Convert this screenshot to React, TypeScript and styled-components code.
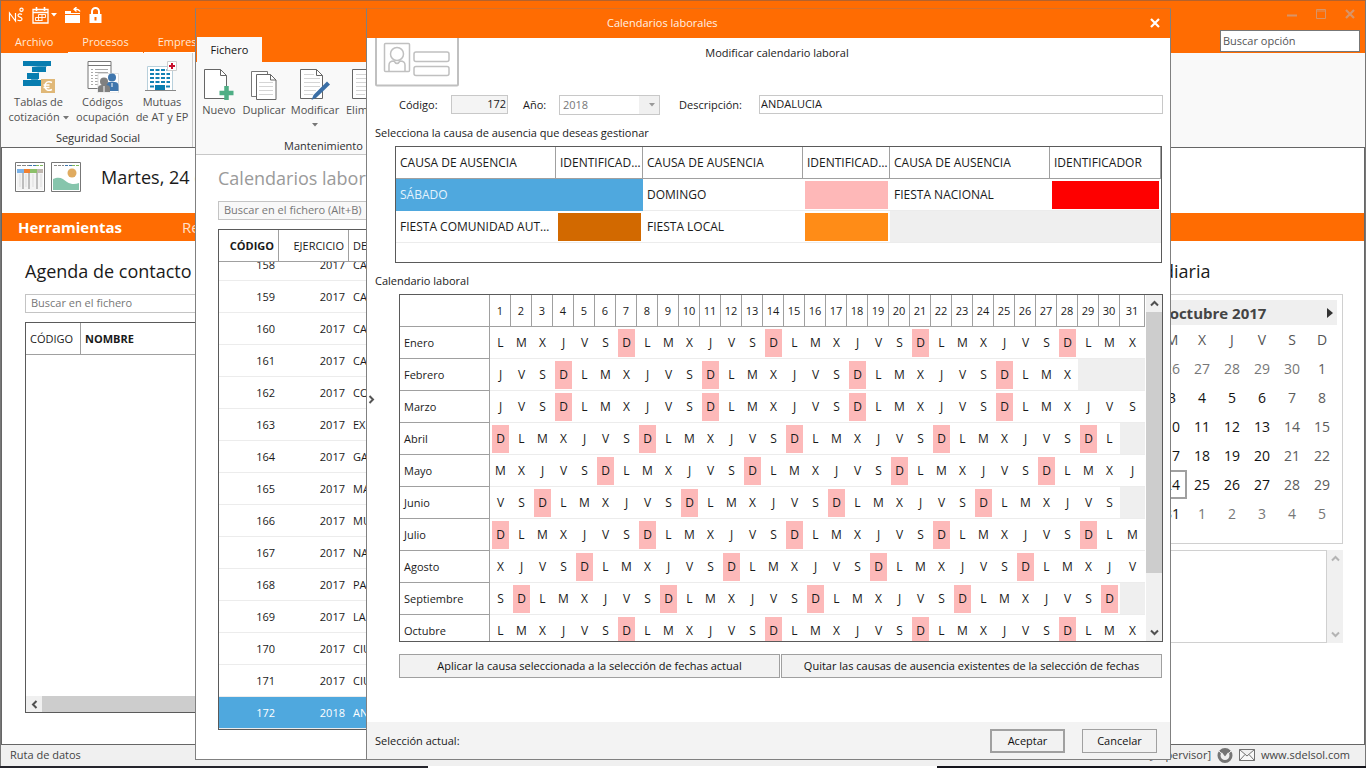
import React from "react";
import styled, { createGlobalStyle, css } from "styled-components";

const ORANGE = "#ff6c02";
const BLUE = "#4fa8de";
const LINE = "#a0a0a0";
const DARK = "#5a5a5a";

const Global = createGlobalStyle`
  * { box-sizing: border-box; }
  html, body { margin: 0; padding: 0; }
  body, button, input, select, table {
    font-family: "Open Sans", "Noto Sans", "Liberation Sans", sans-serif;
    font-size: 11px;
    line-height: 16px;
    color: #1a1a1a;
  }
  button { padding: 0; border: 0; background: none; }
  a { color: inherit; text-decoration: none; }
  h1, h2, h3, p { margin: 0; font-weight: 400; }
`;

/* ---------- desktop and main window ---------- */

const Desktop = styled.div`
  position: relative;
  height: 100vh;
  min-height: 560px;
  overflow: hidden;
  padding-bottom: 2px;
  background: linear-gradient(90deg, #25252c 0 31.3%, #fff 31.3% 68.6%, #15151c 68.6%);
`;

const MainWindow = styled.main`
  height: 100%;
  display: flex;
  flex-direction: column;
  border: 1px solid #777;
  border-top-color: #b5622c;
  border-bottom: 0;
  background: #f0f0f0;
`;

const TitleBar = styled.header`
  display: flex;
  justify-content: space-between;
  height: 52px;
  flex: none;
  background: ${ORANGE};
`;

const TitleLeft = styled.div`
  display: flex;
  flex-direction: column;
  justify-content: space-between;
`;

const QuickBar = styled.div`
  display: flex;
  align-items: center;
  height: 28px;
  padding-left: 7px;
  gap: 8px;
`;

const IconButton = styled.button`
  display: flex;
  align-items: center;
  gap: 2px;
  color: #fff;
`;

const TabBar = styled.nav`
  display: flex;
  gap: 1px;
  height: 22px;
`;

const Tab = styled.button<{ $line?: boolean }>`
  height: 22px;
  padding: 0 14px;
  color: #ffe9d6;
  border-bottom: 1px solid ${(p) => (p.$line ? "#fff" : "transparent")};
`;

const TitleRight = styled.div`
  display: flex;
  flex-direction: column;
  align-items: flex-end;
  padding: 0 5px;
`;

const WindowButtons = styled.div`
  display: flex;
  align-items: center;
  gap: 19px;
  height: 29px;
  padding: 0 5px 4px 0;
`;

const OptionSearch = styled.input`
  width: 140px;
  height: 22px;
  padding: 0 2px 2px;
  border: 1px solid #777;
  background: #fff;
  &::placeholder { color: #555; opacity: 1; }
`;

const Ribbon = styled.section<{ $height: number }>`
  position: relative;
  display: flex;
  flex: none;
  height: ${(p) => p.$height}px;
  background: #f9f9f9;
`;

const RibbonGroup = styled.div`
  display: flex;
  flex-direction: column;
  align-items: center;
  justify-content: space-between;
  padding: 6px 3px 1px 6px;
  border-right: 1px solid #ccc;
`;

const RibbonItems = styled.div`
  display: flex;
`;

const RibbonButton = styled.button<{ $width: number }>`
  display: flex;
  flex-direction: column;
  align-items: center;
  flex: none;
  width: ${(p) => p.$width}px;
  line-height: 15px;
  color: #505050;
  svg { margin-bottom: 1px; }
`;

const CaretSlot = styled.span`
  display: flex;
  padding-top: 6px;
`;

const RibbonLabel = styled.span`
  line-height: 16px;
  color: #303030;
`;

const Workspace = styled.section`
  display: flex;
  flex-direction: column;
  flex: 1;
  min-height: 0;
  padding-top: 1px;
  border: 1px solid #666;
  background: #fff;
`;

const DateRow = styled.div`
  display: flex;
  align-items: center;
  flex: none;
  gap: 6px;
  height: 64px;
  padding: 0 0 8px 13px;
`;

const Heading = styled.h2<{ $muted?: boolean }>`
  font-size: 18px;
  line-height: 26px;
  white-space: nowrap;
  color: ${(p) => (p.$muted ? "#9a9a9a" : "#1a1a1a")};
`;

const DateHeading = styled(Heading)`
  margin-left: 14px;
`;

const SectionBar = styled.nav`
  display: flex;
  align-items: center;
  flex: none;
  gap: 60px;
  height: 28px;
  padding-left: 16px;
  background: ${ORANGE};
`;

const SectionTab = styled.button<{ $active?: boolean }>`
  font-size: 15px;
  line-height: 28px;
  font-weight: ${(p) => (p.$active ? 700 : 400)};
  color: ${(p) => (p.$active ? "#fff" : "#ffe0c8")};
`;

const Columns = styled.div`
  display: grid;
  grid-template-columns: 1fr 248px;
  gap: 24px;
  flex: 1;
  min-height: 0;
  padding: 17px 21px 31px 23px;
`;

const Contacts = styled.div`
  display: flex;
  flex-direction: column;
  min-width: 0;
`;

const FileSearch = styled.input`
  display: block;
  width: 100%;
  height: 19px;
  padding: 0 5px 2px;
  border: 1px solid #c4c4c4;
  background: #fff;
  &::placeholder { color: #777; opacity: 1; }
`;

const ContactSearch = styled(FileSearch)`
  margin: 10px 0 9px;
`;

const ListBox = styled.div`
  display: flex;
  flex-direction: column;
  flex: 1;
  min-height: 0;
  overflow: hidden;
  border: 1px solid ${DARK};
  background: #fff;
`;

const Grid = styled.table`
  width: 100%;
  flex: none;
  table-layout: fixed;
  border-collapse: separate;
  border-spacing: 0;
`;

const HeadCell = styled.th<{ $strong?: boolean; $right?: boolean }>`
  height: 32px;
  padding: 0 4px;
  overflow: hidden;
  text-overflow: ellipsis;
  white-space: nowrap;
  text-align: ${(p) => (p.$right ? "right" : "left")};
  font-weight: ${(p) => (p.$strong ? 700 : 400)};
  border-right: 1px solid ${LINE};
  border-bottom: 1px solid ${LINE};
`;

const Fill = styled.div`
  flex: 1;
`;

const HScroll = styled.div`
  display: flex;
  height: 16px;
  background: #cdcdcd;
`;

const ScrollButton = styled.button<{ $faint?: boolean }>`
  display: flex;
  align-items: center;
  justify-content: center;
  flex: none;
  width: 16px;
  height: 17px;
  background: #f0f0f0;
  color: ${(p) => (p.$faint ? "#b4b4b4" : "#505050")};
`;

const Daily = styled.div`
  display: flex;
  flex-direction: column;
`;

const MonthBox = styled.div`
  height: 250px;
  margin-top: 10px;
  padding: 5px;
  border: 1px solid #d0d0d0;
`;

const MonthHead = styled.div`
  display: flex;
  align-items: center;
  height: 25px;
  padding: 0 4px;
  background: #efefef;
`;

const MonthName = styled.h3`
  flex: 1;
  padding-left: 4px;
  text-align: center;
  font-size: 15px;
  font-weight: 700;
  color: #444;
`;

const MonthTable = styled.table`
  margin-left: auto;
  width: 210px;
  table-layout: fixed;
  border-collapse: separate;
  border-spacing: 0;
`;

const MonthCell = styled.td<{ $tone?: string; $today?: boolean }>`
  height: 29px;
  padding: 0;
  text-align: center;
  font-size: 14px;
  font-weight: 400;
  color: ${(p) => p.$tone || "#111"};
  ${(p) => p.$today && css`border: 2px solid #a0a0a0;`}
`;

const Notes = styled.div`
  display: flex;
  height: 93px;
  margin-top: 6px;
`;

const NotesText = styled.textarea`
  flex: 1;
  min-width: 0;
  border: 1px solid #d0d0d0;
  resize: none;
`;

const VScroll = styled.div`
  display: flex;
  flex-direction: column;
  justify-content: space-between;
  flex: none;
  width: 16px;
  background: #f0f0f0;
`;

const StatusBar = styled.footer`
  display: flex;
  align-items: center;
  justify-content: space-between;
  flex: none;
  height: 21px;
  padding: 0 15px 1px 9px;
  color: #444;
`;

const StatusRight = styled.div`
  display: flex;
  align-items: center;
  gap: 6px;
`;

/* ---------- calendars list window ---------- */

const Floating = styled.section`
  position: absolute;
  top: 8px;
  bottom: 8px;
  right: 195px;
  display: flex;
  flex-direction: column;
  overflow: hidden;
  border: 1px solid #808080;
  border-top-color: #d8702a;
  background: #fff;
`;

const ListWindow = styled(Floating)`
  left: 195px;
`;

const ListTitle = styled.header`
  display: flex;
  align-items: flex-end;
  flex: none;
  height: 53px;
  padding-left: 1px;
  background: ${ORANGE};
`;

const ActiveTab = styled.button`
  width: 65px;
  height: 25px;
  background: #f9f9f9;
  color: #111;
`;

const ListRibbon = styled(Ribbon)`
  border-bottom: 1px solid #c8c8c8;
`;

const ListGroup = styled(RibbonGroup)`
  width: 256px;
  padding: 7px 0 0;
`;

const ListItems = styled(RibbonItems)`
  align-self: flex-start;
`;

const ListBody = styled.div`
  display: flex;
  flex-direction: column;
  flex: 1;
  min-height: 0;
  padding: 10px 22px 29px;
`;

const CalendarSearch = styled(FileSearch)`
  flex: none;
  margin: 10px 0 9px;
  background: #f8f8f8;
`;

const RowsBottom = styled.div`
  display: flex;
  flex-direction: column;
  justify-content: flex-end;
  flex: 1;
  min-height: 0;
  overflow: hidden;
`;

const ListRow = styled.tr<{ $selected?: boolean }>`
  background: ${(p) => (p.$selected ? BLUE : "#fff")};
  td { color: ${(p) => (p.$selected ? "#fff" : "#1a1a1a")}; }
`;

const ListCell = styled.td<{ $right?: boolean }>`
  height: 32px;
  padding: 0 4px;
  text-align: ${(p) => (p.$right ? "right" : "left")};
  border-bottom: 1px solid #ececec;
`;

/* ---------- edit window ---------- */

const EditWindow = styled(Floating)`
  left: 366px;
`;

const EditTitle = styled.header`
  display: flex;
  align-items: center;
  justify-content: space-between;
  flex: none;
  height: 29px;
  padding: 0 10px 2px 240px;
  color: #fff;
  background: ${ORANGE};
`;

const EditHeading = styled.h1`
  font-size: 11px;
  line-height: 16px;
  color: #fff2e6;
`;

const EditBody = styled.div`
  position: relative;
  display: flex;
  flex-direction: column;
  flex: 1;
  min-height: 0;
  padding: 0 7px 44px 8px;
`;

const Banner = styled.div`
  display: grid;
  grid-template-columns: 84px 1fr 68px;
  flex: none;
  height: 56px;
`;

const Subtitle = styled.h2`
  padding-top: 7px;
  text-align: center;
  font-size: 11px;
  line-height: 16px;
`;

const FormRow = styled.div`
  display: flex;
  align-items: center;
  flex: none;
  height: 21px;
  padding-left: 24px;
`;

const FieldLabel = styled.label<{ $width: number }>`
  flex: none;
  width: ${(p) => p.$width}px;
`;

const TextField = styled.input<{ $width?: number }>`
  height: 19px;
  ${(p) => (p.$width ? css`width: ${p.$width}px; flex: none;` : css`flex: 1; min-width: 0;`)}
  padding: 0 1px 2px;
  border: 1px solid #c8c8c8;
  background: #fff;
`;

const CodeField = styled(TextField)`
  margin-right: 15px;
  background: #f4f4f4;
  text-align: right;
`;

const SelectWrap = styled.div`
  position: relative;
  flex: none;
  width: 101px;
  height: 20px;
  margin-right: 19px;
  svg { position: absolute; right: 5px; top: 8px; pointer-events: none; }
`;

const YearSelect = styled.select`
  width: 100%;
  height: 100%;
  padding: 0 3px;
  appearance: none;
  border: 1px solid #c8c8c8;
  border-radius: 0;
  background: linear-gradient(90deg, #fff 0 80%, #f0f0f0 80%);
  color: #777;
  opacity: 1;
`;

const Caption = styled.p`
  flex: none;
  height: 31px;
  padding-top: 10px;
`;

const CauseBox = styled.div`
  flex: none;
  height: 117px;
  margin: 0 1px 0 20px;
  border: 1px solid ${DARK};
`;

const CauseHead = styled(HeadCell)`
  padding: 0 0 0 4px;
  font-size: 12px;
`;

const CauseCell = styled.td<{ $fill?: string; $selected?: boolean }>`
  height: 32px;
  padding: 0 4px;
  font-size: 12px;
  overflow: hidden;
  white-space: nowrap;
  text-overflow: ellipsis;
  border-bottom: 1px solid ${(p) => (p.$selected ? BLUE : "#ececec")};
  background: ${(p) => (p.$selected ? BLUE : p.$fill || "#fff")};
  color: ${(p) => (p.$selected ? "#e4f3fd" : "#1a1a1a")};
`;

const SwatchCell = styled(CauseCell)`
  padding: 2px 2px 1px;
`;

const Swatch = styled.div<{ $color: string }>`
  height: 28px;
  background: ${(p) => p.$color};
`;

const YearBox = styled.div`
  display: flex;
  flex: 1;
  min-height: 0;
  margin-left: 24px;
  overflow: hidden;
  border: 1px solid ${DARK};
`;

const YearView = styled.div`
  flex: 1;
  min-width: 0;
  overflow: hidden;
`;

const DayHead = styled(HeadCell)`
  padding: 0;
  text-align: center;
`;

const MonthLabel = styled.th`
  height: 32px;
  padding: 0 4px;
  text-align: left;
  font-weight: 400;
  border-right: 1px solid ${LINE};
  border-bottom: 1px solid ${LINE};
`;

const DayCell = styled.td<{ $empty?: boolean }>`
  height: 32px;
  padding: 2px 2px 1px;
  text-align: center;
  border-bottom: 1px solid #ececec;
  background: ${(p) => (p.$empty ? "#efefef" : "#fff")};
`;

const Day = styled.div<{ $sunday?: boolean }>`
  height: 28px;
  font-size: 12px;
  line-height: 28px;
  background: ${(p) => (p.$sunday ? "#fdb9b9" : "transparent")};
`;

const YearScroll = styled(VScroll)`
  margin-left: 1px;
`;

const Thumb = styled.div`
  height: 261px;
  margin-bottom: auto;
  background: #cdcdcd;
`;

const Actions = styled.div`
  display: grid;
  grid-template-columns: 1fr 1fr;
  gap: 1px;
  flex: none;
  margin: 12px 1px 0 24px;
`;

const PushButton = styled.button<{ $primary?: boolean; $width?: number }>`
  height: 24px;
  width: ${(p) => (p.$width ? p.$width + "px" : "auto")};
  border: ${(p) => (p.$primary ? 2 : 1)}px solid ${LINE};
  background: #f2f2f2;
  color: #111;
`;

const EditFooter = styled.footer`
  display: flex;
  align-items: center;
  flex: none;
  gap: 17px;
  height: 37px;
  padding: 0 13px 0 8px;
  background: #f3f3f3;
`;

const Selection = styled.span`
  flex: 1;
`;

const Expander = styled.button`
  position: absolute;
  left: 0;
  top: 354px;
  width: 8px;
  height: 12px;
  color: #555;
`;

/* ---------- drawings ---------- */

const Caret = ({ color = "#777" }: { color?: string }) => (
  <svg width="6" height="4" viewBox="0 0 6 4"><path d="M0 0h6L3 3.5z" fill={color} /></svg>
);

const Chevron = ({ turn = 0 }: { turn?: number }) => (
  <svg width="9" height="9" viewBox="0 0 9 9">
    <path d="M1 6.5 4.500 3 8 6.500" transform={`rotate(${turn} 4.5 4.500)`} fill="none" stroke="currentColor" strokeWidth="2" />
  </svg>
);

const Cross = ({ color }: { color: string }) => (
  <svg width="10" height="10" viewBox="0 0 10 10"><path d="M1 1l8 8M9 1l-8 8" stroke={color} strokeWidth="2.200" /></svg>
);

const BrandIcon = () => (
  <svg width="16" height="16" viewBox="0 0 16 16" fill="none" stroke="#fff" strokeWidth="1.200">
    <path d="M1.500 14V6l6 8V6M14 7.500c-1.500-1-4-.8-4 1 0 2 4 1.300 4 3.500 0 2-3 2-4.500 1" />
    <circle cx="13.500" cy="2.800" r="1.600" />
  </svg>
);

const CalendarIcon = () => (
  <svg width="17" height="17" viewBox="0 0 17 17" fill="none" stroke="#fff">
    <path d="M1 2.500h15v13.500H1zM1 5.500h15" strokeWidth="1.300" />
    <path d="M4.500 0v4M12.500 0v4" strokeWidth="1.600" />
    <path d="M6.500 7.500h7M3.500 10.500h10M3.500 13.500h7M3.500 10.500v3M6.500 7.500v6M10 7.500v6M13.500 7.500v3" strokeWidth=".9" />
  </svg>
);

const FolderIcon = () => (
  <svg width="16" height="17" viewBox="0 0 16 17">
    <path d="M0 4h6v2h9v1H0zM0 8h15v8H0z" fill="#fff" />
    <path d="M15 4.500c-1-2.500-3-2.500-6-2.500M11.500 0 9 2.200 11.500 4.500" fill="none" stroke="#fff" strokeWidth="1.300" />
  </svg>
);

const LockIcon = () => (
  <svg width="13" height="17" viewBox="0 0 13 17">
    <path d="M3 8V4.500a3.500 3.500 0 0 1 7 0V8" fill="none" stroke="#fff" strokeWidth="2" />
    <path d="M0.500 7h12v9h-12zM5.500 10v3.500h2V10z" fill="#fff" fillRule="evenodd" />
  </svg>
);

const TablesIcon = () => (
  <svg width="34" height="34" viewBox="0 0 34 34">
    <path d="M1 2h28v5H1zM10 8h14v5H10zM5 14h12v6H5zM1 21h21v6H1z" fill="#087db0" />
    <path d="M8 7h17l-4 4-8 4-5 7h8v-8l8-5z" fill="#087db0" opacity=".7" />
    <rect x="19" y="20" width="14" height="14" fill="#e0b878" />
    <path d="M30 23.500c-4-2-7 0-7 3.500s3 5.500 7 3.500M21.500 26h6M21.500 28.500h6" fill="none" stroke="#fff" strokeWidth="1.500" />
  </svg>
);

const CodesIcon = () => (
  <svg width="34" height="34" viewBox="0 0 34 34">
    <path d="M2 2.500h23v27H2z" fill="#fff" stroke="#777" />
    <path d="M2 6.500h23" stroke="#777" />
    <path d="M5 10.500h2M9 10.500h13M5 13.500h2M9 13.500h13M5 16.500h2M9 16.500h6M5 19.500h2M9 19.500h3M5 22.500h2M9 22.500h3M5 25.500h2M9 25.500h3" stroke="#aaa" />
    <path d="M12 14.500h20.500v19.500H12z" fill="#fff" stroke="#ddd" />
    <circle cx="26" cy="18.500" r="4" fill="#3f76ad" /><path d="M19.500 32v-6q1-3 4-3h5q4 0 4 4v5z" fill="#3f76ad" />
    <circle cx="18" cy="22.500" r="4" fill="#808080" /><path d="M12 33v-4q0-3 4-3h4q4 0 4 3v4z" fill="#808080" />
    <path d="M18 27v6M26 24v4" stroke="#fff" />
  </svg>
);

const MutuaIcon = () => (
  <svg width="34" height="34" viewBox="0 0 34 34">
    <path d="M2.500 7.500h25v24h-25z" fill="#fff" stroke="#b8d0dc" />
    <path d="M5 11h20M5 15h20M5 19h20M5 23h20" stroke="#1181b4" strokeWidth="2" strokeDasharray="4 1.500" />
    <path d="M10 26h10v5H10z" fill="#087db0" /><path d="M5 27.500h4M21 27.500h4" stroke="#1181b4" strokeWidth="2" />
    <path d="M0 31.500h31" stroke="#888" />
    <path d="M22.500 2.500h9v9h-9z" fill="#fff" stroke="#ccc" />
    <path d="M27 4v6M24 7h6" stroke="#c8102e" strokeWidth="2" />
  </svg>
);

const Page = ({ kind }: { kind: "new" | "copy" | "edit" | "plain" }) => (
  <svg width="34" height="32" viewBox="0 0 34 32">
    {kind === "copy" && <path d="M4.500 2.500h16v25h-16z" fill="#fff" stroke="#777" />}
    <g transform={kind === "copy" ? "translate(5 5)" : "translate(1 0)"}>
      <path d={kind === "copy" ? "M4.500.5h14l5.500 5.500v19.500H4.500z" : "M1.500.5h16l6 6v23h-22z"} fill="#fff" stroke="#666" />
      <path d={kind === "copy" ? "M18.500.5v5.500H24" : "M17.500.5v6h6"} fill="none" stroke="#666" />
      {kind !== "new" && <path d={kind === "copy" ? "M7 8.500h14M7 12.500h14M7 16.500h14M7 20.500h14" : "M5 5.500h10M5 9.500h16M5 13.500h16M5 17.500h16M5 21.500h12M5 25.500h9"} stroke="#d5d5d5" />}
    </g>
    {kind === "new" && <path d="M24.500 17v14M17.500 24h14" stroke="#4fae85" strokeWidth="4.500" />}
    {kind === "edit" && <path d="M13.500 31l2-5L29 12.500l3 3-13.500 13z" fill="#3a6ea5" />}
  </svg>
);

const AgendaIcon = () => (
  <svg width="30" height="30" viewBox="0 0 30 30">
    <path d="M.5.500h29v29H.5z" fill="#fff" stroke="#777" />
    <path d="M2 3.500h12" stroke="#888" strokeDasharray="4 1" /><path d="M14 3.500h7" stroke="#3f76ad" strokeDasharray="3 1" /><path d="M21 3.500h7" stroke="#7fb85c" strokeDasharray="3 1" />
    <path d="M2 7h7v4H2z" fill="#7ab2e8" /><path d="M9 7h6v4H9z" fill="#f08030" /><path d="M15 7h7v4h-7z" fill="#8cc06a" /><path d="M22 7h6v4h-6z" fill="#c0b8b0" />
    <path d="M2 11h26v17H2z" fill="#f4f4f4" />
    <path d="M8 11v16M14 11v16M22 11v16" stroke="#aaa" strokeWidth="1.500" />
    <path d="M5 12v13M11 12v13M18 12v13M26 12v13" stroke="#ddd" />
  </svg>
);

const PictureIcon = () => (
  <svg width="30" height="30" viewBox="0 0 30 30">
    <path d="M.5.500h29v29H.5z" fill="#fff" stroke="#777" />
    <path d="M3 3.500h10" stroke="#888" strokeDasharray="3 1" /><path d="M14 3.500h7" stroke="#3f76ad" strokeDasharray="3 1" /><path d="M21 3.500h7" stroke="#7fb85c" strokeDasharray="3 1" />
    <circle cx="21" cy="11" r="4.500" fill="#e0ab60" />
    <path d="M2 17c7-3 10 0 14 3 4 2.500 8 2.500 12 1v7H2z" fill="#86c5ac" />
  </svg>
);

const CardIcon = () => (
  <svg width="84" height="49" viewBox="0 0 84 49" fill="none" stroke="#c0c0c0">
    <path d="M1 0v46.500q0 1 1 1h80q1 0 1-1V0" strokeWidth="2" />
    <rect x="9.500" y="5.500" width="25" height="28" rx="1" strokeWidth="1.500" />
    <circle cx="22" cy="16" r="6.500" strokeWidth="1.500" />
    <path d="M14 33v-6q0-4 5-4 3 5 6 0 5 0 5 4v6" strokeWidth="1.500" />
    <rect x="39" y="14" width="35" height="9.500" rx="2" strokeWidth="1.500" />
    <rect x="39" y="28.500" width="35" height="9" rx="2" strokeWidth="1.500" />
  </svg>
);

const BadgeIcon = () => (
  <svg width="16" height="16" viewBox="0 0 16 16">
    <circle cx="8" cy="8.500" r="6" fill="none" stroke="#757575" strokeWidth="3" />
    <path d="M3.500 3.500h9L8 9.500z" fill="#757575" /><path d="M2 4l6 6.500L14 4" fill="none" stroke="#f0f0f0" />
  </svg>
);

const MailIcon = () => (
  <svg width="16" height="12" viewBox="0 0 16 12" fill="#f8f8f8" stroke="#707070">
    <path d="M.5.500h15v11H.5zM.5.500 8 7l7.500-6.500M.5 11.500l5.500-6M15.500 11.500l-5.500-6" />
  </svg>
);

/* ---------- data ---------- */

const calendars: [number, number, string][] = [
  [158, 2017, "CA"], [159, 2017, "CA"], [160, 2017, "CA"], [161, 2017, "CA"], [162, 2017, "CO"],
  [163, 2017, "EX"], [164, 2017, "GA"], [165, 2017, "MA"], [166, 2017, "MU"], [167, 2017, "NA"],
  [168, 2017, "PA"], [169, 2017, "LA"], [170, 2017, "CIU"], [171, 2017, "CIU"], [172, 2018, "AN"],
];

const months: [string, number, number][] = [
  ["Enero", 0, 31], ["Febrero", 3, 28], ["Marzo", 3, 31], ["Abril", 6, 30], ["Mayo", 1, 31],
  ["Junio", 4, 30], ["Julio", 6, 31], ["Agosto", 2, 31], ["Septiembre", 5, 30], ["Octubre", 0, 31],
];
const WEEK = "LMXJVSD";
const days = Array.from({ length: 31 }, (_, i) => i);

const weeks = [
  [25, 26, 27, 28, 29, 30, 1], [2, 3, 4, 5, 6, 7, 8], [9, 10, 11, 12, 13, 14, 15],
  [16, 17, 18, 19, 20, 21, 22], [23, 24, 25, 26, 27, 28, 29], [30, 31, 1, 2, 3, 4, 5],
];

const monthTone = (row: number, col: number) => {
  if ((row === 0 && col < 6) || (row === 5 && col > 1)) return "#777";
  return col > 4 ? "#5c5c5c" : "#111";
};

/* ---------- windows ---------- */

function MainApp() {
  return (
    <MainWindow>
      <TitleBar>
        <TitleLeft>
          <QuickBar>
            <IconButton aria-label="Inicio"><BrandIcon /></IconButton>
            <IconButton aria-label="Calendario"><CalendarIcon /><Caret color="#fff" /></IconButton>
            <IconButton aria-label="Abrir"><FolderIcon /></IconButton>
            <IconButton aria-label="Bloquear"><LockIcon /></IconButton>
          </QuickBar>
          <TabBar>
            <Tab>Archivo</Tab>
            <Tab $line>Procesos</Tab>
            <Tab $line>Empresa</Tab>
          </TabBar>
        </TitleLeft>
        <TitleRight>
          <WindowButtons>
            <IconButton aria-label="Minimizar"><svg width="10" height="10"><path d="M0 6.500h10" stroke="#d89468" strokeWidth="2" /></svg></IconButton>
            <IconButton aria-label="Maximizar"><svg width="10" height="10"><path d="M.5.500h9v9h-9zM0 2h10" fill="none" stroke="#d89468" /></svg></IconButton>
            <IconButton aria-label="Cerrar"><Cross color="#d89468" /></IconButton>
          </WindowButtons>
          <OptionSearch aria-label="Buscar opción" placeholder="Buscar opción" />
        </TitleRight>
      </TitleBar>
      <Ribbon $height={94}>
        <RibbonGroup>
          <RibbonItems>
            <RibbonButton $width={63}><TablesIcon /><span>Tablas de<br />cotización <Caret /></span></RibbonButton>
            <RibbonButton $width={65}><CodesIcon />Códigos<br />ocupación</RibbonButton>
            <RibbonButton $width={54}><MutuaIcon />Mutuas<br />de AT y EP</RibbonButton>
          </RibbonItems>
          <RibbonLabel>Seguridad Social</RibbonLabel>
        </RibbonGroup>
      </Ribbon>
      <Workspace>
        <DateRow>
          <AgendaIcon />
          <PictureIcon />
          <DateHeading>Martes, 24 de</DateHeading>
        </DateRow>
        <SectionBar>
          <SectionTab $active>Herramientas</SectionTab>
          <SectionTab>Re</SectionTab>
        </SectionBar>
        <Columns>
          <Contacts>
            <Heading>Agenda de contacto</Heading>
            <ContactSearch aria-label="Buscar contacto" placeholder="Buscar en el fichero" />
            <ListBox>
              <Grid>
                <colgroup><col style={{ width: 55 }} /><col /></colgroup>
                <thead><tr><HeadCell>CÓDIGO</HeadCell><HeadCell $strong>NOMBRE</HeadCell></tr></thead>
              </Grid>
              <Fill />
              <HScroll><ScrollButton aria-label="Izquierda"><Chevron turn={-90} /></ScrollButton></HScroll>
            </ListBox>
          </Contacts>
          <Daily>
            <Heading>Agenda diaria</Heading>
            <MonthBox>
              <MonthHead>
                <MonthName>octubre 2017</MonthName>
                <IconButton aria-label="Mes siguiente"><svg width="6" height="10"><path d="M0 0l6 5-6 5z" fill="#333" /></svg></IconButton>
              </MonthHead>
              <MonthTable>
                <thead>
                  <tr>{["L", "M", "X", "J", "V", "S", "D"].map((d) => <MonthCell as="th" key={d} $tone="#555">{d}</MonthCell>)}</tr>
                </thead>
                <tbody>
                  {weeks.map((w, r) => (
                    <tr key={r}>
                      {w.map((d, c) => <MonthCell key={c} $tone={monthTone(r, c)} $today={r === 4 && c === 1}>{d}</MonthCell>)}
                    </tr>
                  ))}
                </tbody>
              </MonthTable>
            </MonthBox>
            <Notes>
              <NotesText aria-label="Notas" />
              <VScroll>
                <ScrollButton $faint aria-label="Subir"><Chevron /></ScrollButton>
                <ScrollButton $faint aria-label="Bajar"><Chevron turn={180} /></ScrollButton>
              </VScroll>
            </Notes>
          </Daily>
        </Columns>
      </Workspace>
      <StatusBar>
        <span>Ruta de datos</span>
        <StatusRight>
          <span>[Supervisor]</span>
          <BadgeIcon />
          <MailIcon />
          <a href="#web">www.sdelsol.com</a>
        </StatusRight>
      </StatusBar>
    </MainWindow>
  );
}

const ListCols = () => (
  <colgroup><col style={{ width: 60 }} /><col style={{ width: 70 }} /><col /></colgroup>
);

function CalendarList() {
  return (
    <ListWindow>
      <ListTitle><ActiveTab>Fichero</ActiveTab></ListTitle>
      <ListRibbon $height={93}>
        <ListGroup>
          <ListItems>
            <RibbonButton $width={46}><Page kind="new" />Nuevo</RibbonButton>
            <RibbonButton $width={44}><Page kind="copy" />Duplicar</RibbonButton>
            <RibbonButton $width={58}><Page kind="edit" />Modificar<CaretSlot><Caret /></CaretSlot></RibbonButton>
            <RibbonButton $width={46}><Page kind="plain" />Eliminar</RibbonButton>
          </ListItems>
          <RibbonLabel>Mantenimiento</RibbonLabel>
        </ListGroup>
      </ListRibbon>
      <ListBody>
        <Heading $muted>Calendarios laborales</Heading>
        <CalendarSearch aria-label="Buscar calendario" placeholder="Buscar en el fichero (Alt+B)" />
        <ListBox>
          <Grid>
            <ListCols />
            <thead><tr><HeadCell $strong $right>CÓDIGO</HeadCell><HeadCell $right>EJERCICIO</HeadCell><HeadCell>DE</HeadCell></tr></thead>
          </Grid>
          <RowsBottom>
            <Grid>
              <ListCols />
              <tbody>
                {calendars.map(([code, year, name]) => (
                  <ListRow key={code} $selected={code === 172}>
                    <ListCell $right>{code}</ListCell><ListCell $right>{year}</ListCell><ListCell>{name}</ListCell>
                  </ListRow>
                ))}
              </tbody>
            </Grid>
          </RowsBottom>
        </ListBox>
      </ListBody>
    </ListWindow>
  );
}

function EditCalendar() {
  return (
    <EditWindow>
      <EditTitle>
        <EditHeading>Calendarios laborales</EditHeading>
        <IconButton aria-label="Cerrar ventana"><Cross color="#fff" /></IconButton>
      </EditTitle>
      <EditBody>
        <Banner><CardIcon /><Subtitle>Modificar calendario laboral</Subtitle></Banner>
        <FormRow>
          <FieldLabel $width={52} htmlFor="code">Código:</FieldLabel>
          <CodeField id="code" $width={57} defaultValue="172" readOnly />
          <FieldLabel $width={36} htmlFor="year">Año:</FieldLabel>
          <SelectWrap>
            <YearSelect id="year" disabled defaultValue="2018"><option>2018</option></YearSelect>
            <Caret color="#999" />
          </SelectWrap>
          <FieldLabel $width={80} htmlFor="description">Descripción:</FieldLabel>
          <TextField id="description" defaultValue="ANDALUCIA" />
        </FormRow>
        <Caption>Selecciona la causa de ausencia que deseas gestionar</Caption>
        <CauseBox>
          <Grid>
            <colgroup>
              <col style={{ width: 160 }} /><col style={{ width: 87 }} />
              <col style={{ width: 160 }} /><col style={{ width: 87 }} />
              <col style={{ width: 160 }} /><col />
            </colgroup>
            <thead>
              <tr>
                <CauseHead>CAUSA DE AUSENCIA</CauseHead><CauseHead>IDENTIFICADOR</CauseHead>
                <CauseHead>CAUSA DE AUSENCIA</CauseHead><CauseHead>IDENTIFICADOR</CauseHead>
                <CauseHead>CAUSA DE AUSENCIA</CauseHead><CauseHead>IDENTIFICADOR</CauseHead>
              </tr>
            </thead>
            <tbody>
              <tr>
                <CauseCell $selected>SÁBADO</CauseCell><CauseCell $selected />
                <CauseCell>DOMINGO</CauseCell><SwatchCell><Swatch $color="#feb8b8" /></SwatchCell>
                <CauseCell>FIESTA NACIONAL</CauseCell><SwatchCell><Swatch $color="#fe0000" /></SwatchCell>
              </tr>
              <tr>
                <CauseCell>FIESTA COMUNIDAD AUTÓNOMA</CauseCell><SwatchCell><Swatch $color="#d26900" /></SwatchCell>
                <CauseCell>FIESTA LOCAL</CauseCell><SwatchCell><Swatch $color="#ff8c17" /></SwatchCell>
                <CauseCell $fill="#efefef" /><CauseCell $fill="#efefef" />
              </tr>
            </tbody>
          </Grid>
        </CauseBox>
        <Caption>Calendario laboral</Caption>
        <YearBox>
          <YearView>
            <Grid>
              <colgroup>
                <col style={{ width: 90 }} />
                {days.map((d) => <col key={d} style={{ width: d < 30 ? "2.82%" : "auto" }} />)}
              </colgroup>
              <thead>
                <tr><DayHead />{days.map((d) => <DayHead key={d}>{d + 1}</DayHead>)}</tr>
              </thead>
              <tbody>
                {months.map(([name, start, length]) => (
                  <tr key={name}>
                    <MonthLabel>{name}</MonthLabel>
                    {days.map((d) => {
                      const letter = WEEK[(start + d) % 7];
                      return d < length
                        ? <DayCell key={d}><Day $sunday={letter === "D"}>{letter}</Day></DayCell>
                        : <DayCell key={d} $empty />;
                    })}
                  </tr>
                ))}
              </tbody>
            </Grid>
          </YearView>
          <YearScroll>
            <ScrollButton aria-label="Subir calendario"><Chevron /></ScrollButton>
            <Thumb />
            <ScrollButton aria-label="Bajar calendario"><Chevron turn={180} /></ScrollButton>
          </YearScroll>
        </YearBox>
        <Actions>
          <PushButton>Aplicar la causa seleccionada a la selección de fechas actual</PushButton>
          <PushButton>Quitar las causas de ausencia existentes de la selección de fechas</PushButton>
        </Actions>
        <Expander aria-label="Desplegar panel"><Chevron turn={90} /></Expander>
      </EditBody>
      <EditFooter>
        <Selection>Selección actual:</Selection>
        <PushButton $primary $width={75}>Aceptar</PushButton>
        <PushButton $width={75}>Cancelar</PushButton>
      </EditFooter>
    </EditWindow>
  );
}

export default function App() {
  return (
    <>
      <Global />
      <Desktop>
        <MainApp />
        <CalendarList />
        <EditCalendar />
      </Desktop>
    </>
  );
}
